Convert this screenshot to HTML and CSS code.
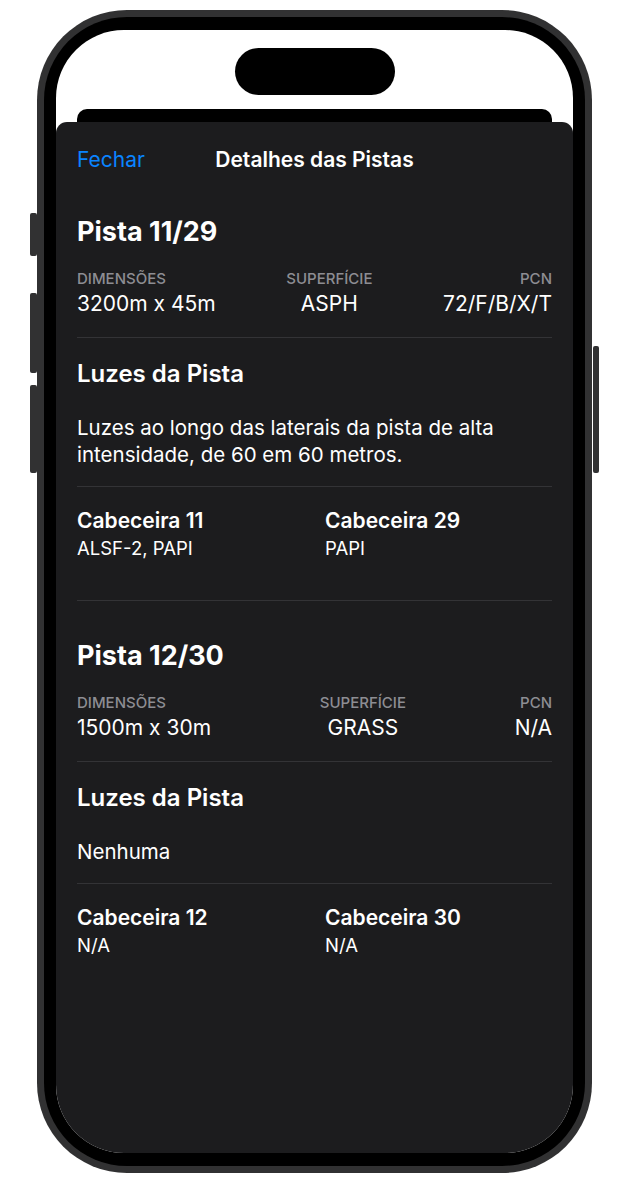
FILE: index.html
```html
<!DOCTYPE html>
<html lang="pt-BR">
<head>
    <meta charset="UTF-8">
    <meta name="viewport" content="width=device-width, initial-scale=1.0">
    <title>Detalhes das Pistas</title>
    <link rel="stylesheet" href="styles.css">
</head>
<body>
    <div class="phone">
        <!-- side buttons -->
        <span class="side-btn mute"></span>
        <span class="side-btn vol-up"></span>
        <span class="side-btn vol-down"></span>
        <span class="side-btn power"></span>

        <div class="bezel">
            <div class="screen">
                <div class="island"></div>
                <div class="back-card"></div>

                <div class="sheet">
                    <div class="nav">
                        <button class="nav-close">Fechar</button>
                        <div class="nav-title">Detalhes das Pistas</div>
                        <span></span>
                    </div>

                    <section class="runway">
                        <h2 class="runway-title">Pista 11/29</h2>
                        <div class="stats">
                            <div class="stat">
                                <div class="stat-label">DIMENSÕES</div>
                                <div class="stat-value">3200m x 45m</div>
                            </div>
                            <div class="stat center">
                                <div class="stat-label">SUPERFÍCIE</div>
                                <div class="stat-value">ASPH</div>
                            </div>
                            <div class="stat end">
                                <div class="stat-label">PCN</div>
                                <div class="stat-value">72/F/B/X/T</div>
                            </div>
                        </div>
                        <hr class="divider">
                        <h3 class="lights-title">Luzes da Pista</h3>
                        <p class="lights-text">Luzes ao longo das laterais da pista de alta intensidade, de 60 em 60 metros.</p>
                        <hr class="divider small">
                        <div class="thresholds">
                            <div>
                                <div class="th-name">Cabeceira 11</div>
                                <div class="th-lights">ALSF-2, PAPI</div>
                            </div>
                            <div>
                                <div class="th-name">Cabeceira 29</div>
                                <div class="th-lights">PAPI</div>
                            </div>
                        </div>
                    </section>

                    <section class="runway">
                        <h2 class="runway-title">Pista 12/30</h2>
                        <div class="stats">
                            <div class="stat">
                                <div class="stat-label">DIMENSÕES</div>
                                <div class="stat-value">1500m x 30m</div>
                            </div>
                            <div class="stat center">
                                <div class="stat-label">SUPERFÍCIE</div>
                                <div class="stat-value">GRASS</div>
                            </div>
                            <div class="stat end">
                                <div class="stat-label">PCN</div>
                                <div class="stat-value">N/A</div>
                            </div>
                        </div>
                        <hr class="divider">
                        <h3 class="lights-title">Luzes da Pista</h3>
                        <p class="lights-text">Nenhuma</p>
                        <hr class="divider small">
                        <div class="thresholds">
                            <div>
                                <div class="th-name">Cabeceira 12</div>
                                <div class="th-lights">N/A</div>
                            </div>
                            <div>
                                <div class="th-name">Cabeceira 30</div>
                                <div class="th-lights">N/A</div>
                            </div>
                        </div>
                    </section>
                </div>
            </div>
        </div>
    </div>
</body>
</html>
```

FILE: styles.css
```css
body {
    margin: 0;
    background: #ffffff;
    font-family: Inter, "Noto Sans", sans-serif;
}
.phone {
    position: relative;
    margin: 10px 0 0 37px;
    width: 555px;
    height: 1163px;
    box-sizing: border-box;
    padding: 7px;
    background: #313132;
    border-radius: 90px;
}
.side-btn {
    position: absolute;
    width: 7px;
    background: #313132;
    border-radius: 2px;
}
.mute { left: -7px; top: 203px; height: 43px; }
.vol-up { left: -7px; top: 283px; height: 80px; }
.vol-down { left: -7px; top: 375px; height: 88px; }
.power { left: 556px; top: 336px; height: 127px; width: 6px; }
.bezel {
    height: 100%;
    box-sizing: border-box;
    padding: 13px 12px;
    background: #000;
    border-radius: 83px;
}
.screen {
    height: 100%;
    display: flex;
    flex-direction: column;
    background: #fff;
    border-radius: 68px;
    overflow: hidden;
}
.island {
    width: 160px;
    height: 47px;
    margin: 18px auto 0;
    background: #000;
    border-radius: 24px;
}
.back-card {
    height: 13px;
    margin: 14px 21px 0;
    background: #000;
    border-radius: 10px 10px 0 0;
}
.sheet {
    flex: 1;
    padding: 0 21px;
    background: #1c1c1e;
    border-radius: 11px 11px 0 0;
    color: #fff;
}
.nav {
    height: 74px;
    display: grid;
    grid-template-columns: 1fr auto 1fr;
    align-items: center;
}
.nav-close {
    justify-self: start;
    padding: 0;
    background: none;
    border: none;
    font-family: inherit;
    font-size: 21px;
    color: #0a84ff;
}
.nav-title {
    font-size: 21px;
    font-weight: 600;
}
.runway {
    padding-top: 19px;
}
.runway + .runway {
    margin-top: 39px;
    border-top: 1px solid #333336;
    padding-top: 38px;
}
.runway-title {
    margin: 0;
    font-size: 27px;
    font-weight: 700;
    line-height: 34px;
}
.stats {
    display: flex;
    justify-content: space-between;
    margin-top: 20px;
}
.stat-label {
    font-size: 15px;
    font-weight: 500;
    line-height: 20px;
    color: #8d8d93;
}
.stat-value {
    margin-top: 2px;
    font-size: 21px;
    line-height: 26px;
}
.center { text-align: center; }
.end { text-align: right; }
.divider {
    margin: 20px 0;
    border: none;
    border-top: 1px solid #333336;
}
.divider.small {
    margin: 18px 0 20px;
}
.lights-title {
    margin: 0;
    font-size: 24px;
    font-weight: 600;
    line-height: 32px;
}
.lights-text {
    margin: 24px 0 0;
    font-size: 20.5px;
    line-height: 27px;
}
.thresholds {
    display: grid;
    grid-template-columns: 1fr 1fr;
    column-gap: 21px;
}
.th-name {
    font-size: 21px;
    font-weight: 600;
    line-height: 27px;
}
.th-lights {
    margin-top: 2px;
    font-size: 18.5px;
    line-height: 25px;
}
```
